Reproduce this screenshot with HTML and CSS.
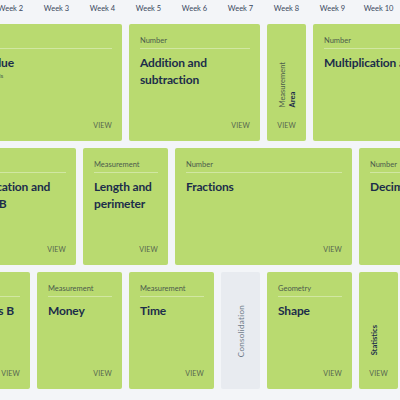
FILE: index.html
```html
<!doctype html>
<html lang="en">
  <head>
    <meta charset="UTF-8" />
    <meta name="viewport" content="width=device-width, initial-scale=1.0" />
    <title>Year 4 Scheme of Learning</title>
    <link rel="stylesheet" href="styles.css">
  </head>

  <body>
    <div class="timeline">
      <div class="week">Week 1</div>
      <div class="week">Week 2</div>
      <div class="week">Week 3</div>
      <div class="week">Week 4</div>
      <div class="week">Week 5</div>
      <div class="week">Week 6</div>
      <div class="week">Week 7</div>
      <div class="week">Week 8</div>
      <div class="week">Week 9</div>
      <div class="week">Week 10</div>
      <div class="week">Week 11</div>
      <div class="week">Week 12</div>

      <!-- Autumn -->
      <div class="block span-4">
        <div class="category">Number</div>
        <div class="title">Place value</div>
        <div class="note">Roman numerals</div>
        <a class="view">View</a>
      </div>
      <div class="block span-3">
        <div class="category">Number</div>
        <div class="title">Addition and subtraction</div>
        <a class="view">View</a>
      </div>
      <div class="block narrow">
        <div class="vertical">
          <span class="category-v">Measurement</span>
          <span class="title-v">Area</span>
        </div>
        <a class="view">View</a>
      </div>
      <div class="block span-4">
        <div class="category">Number</div>
        <div class="title">Multiplication and division A</div>
        <a class="view">View</a>
      </div>

      <!-- Spring -->
      <div class="block span-3">
        <div class="category">Number</div>
        <div class="title">Multiplication and division B</div>
        <a class="view">View</a>
      </div>
      <div class="block span-2">
        <div class="category">Measurement</div>
        <div class="title">Length and perimeter</div>
        <a class="view">View</a>
      </div>
      <div class="block span-4">
        <div class="category">Number</div>
        <div class="title">Fractions</div>
        <a class="view">View</a>
      </div>
      <div class="block span-3">
        <div class="category">Number</div>
        <div class="title">Decimals A</div>
        <a class="view">View</a>
      </div>

      <!-- Summer -->
      <div class="block span-2">
        <div class="category">Number</div>
        <div class="title">Decimals B</div>
        <a class="view">View</a>
      </div>
      <div class="block span-2">
        <div class="category">Measurement</div>
        <div class="title">Money</div>
        <a class="view">View</a>
      </div>
      <div class="block span-2">
        <div class="category">Measurement</div>
        <div class="title">Time</div>
        <a class="view">View</a>
      </div>
      <div class="block narrow consolidation">
        <span class="consolidation-label">Consolidation</span>
      </div>
      <div class="block span-2">
        <div class="category">Geometry</div>
        <div class="title">Shape</div>
        <a class="view">View</a>
      </div>
      <div class="block narrow">
        <div class="vertical">
          <span class="title-v">Statistics</span>
        </div>
        <a class="view">View</a>
      </div>
      <div class="block span-2">
        <div class="category">Geometry</div>
        <div class="title">Position and direction</div>
        <a class="view">View</a>
      </div>
    </div>
  </body>
</html>
```

FILE: styles.css
```css
body {
  margin: 0;
  background: #f3f5f8;
  font-family: 'Lato', 'Liberation Sans', sans-serif;
  color: #1c2d4a;
  overflow: hidden;
}

.timeline {
  display: grid;
  grid-template-columns: repeat(12, 39px);
  grid-template-rows: 17px repeat(3, 117px);
  column-gap: 7px;
  row-gap: 7px;
  margin-left: -55px;
}

.week {
  font-size: 7.5px;
  line-height: 17px;
  text-align: center;
  color: #3a4860;
  white-space: nowrap;
}

.block {
  background: #b9da70;
  border-radius: 2px;
  padding: 12px 10px 11px 11px;
  display: flex;
  flex-direction: column;
  overflow: hidden;
  min-width: 0;
}
.span-2 {
  grid-column: span 2;
}
.span-3 {
  grid-column: span 3;
}
.span-4 {
  grid-column: span 4;
}
.narrow {
  grid-column: span 1;
}

.category {
  font-size: 7.5px;
  line-height: 10px;
  color: #4b5a4c;
  padding-bottom: 2px;
  border-bottom: 1px solid rgba(255, 255, 255, 0.35);
}
.title {
  margin-top: 5px;
  font-size: 12px;
  font-weight: 700;
  line-height: 17px;
  letter-spacing: -0.15px;
  color: #1c2d4a;
}
.note {
  font-size: 6.5px;
  line-height: 10px;
  color: #4b5a4c;
}
.view {
  margin-top: auto;
  align-self: flex-end;
  font-size: 7px;
  line-height: 9px;
  text-transform: uppercase;
  color: #55644f;
  letter-spacing: 0.2px;
}

/* one-week blocks: label reads bottom to top */
.vertical {
  margin-top: auto;
  margin-bottom: 14px;
  writing-mode: vertical-rl;
  transform: rotate(180deg);
  align-self: flex-start;
  font-size: 7.5px;
  line-height: 10px;
}
.vertical + .view {
  margin-top: 0;
}
.category-v {
  display: block;
  color: #4b5a4c;
}
.title-v {
  display: block;
  font-weight: 700;
  color: #1c2d4a;
}

.consolidation {
  background: #e8ebf0;
  align-items: center;
  justify-content: center;
}
.consolidation-label {
  writing-mode: vertical-rl;
  transform: rotate(180deg);
  font-size: 8px;
  color: #6f7a88;
  letter-spacing: 0.3px;
}
```
